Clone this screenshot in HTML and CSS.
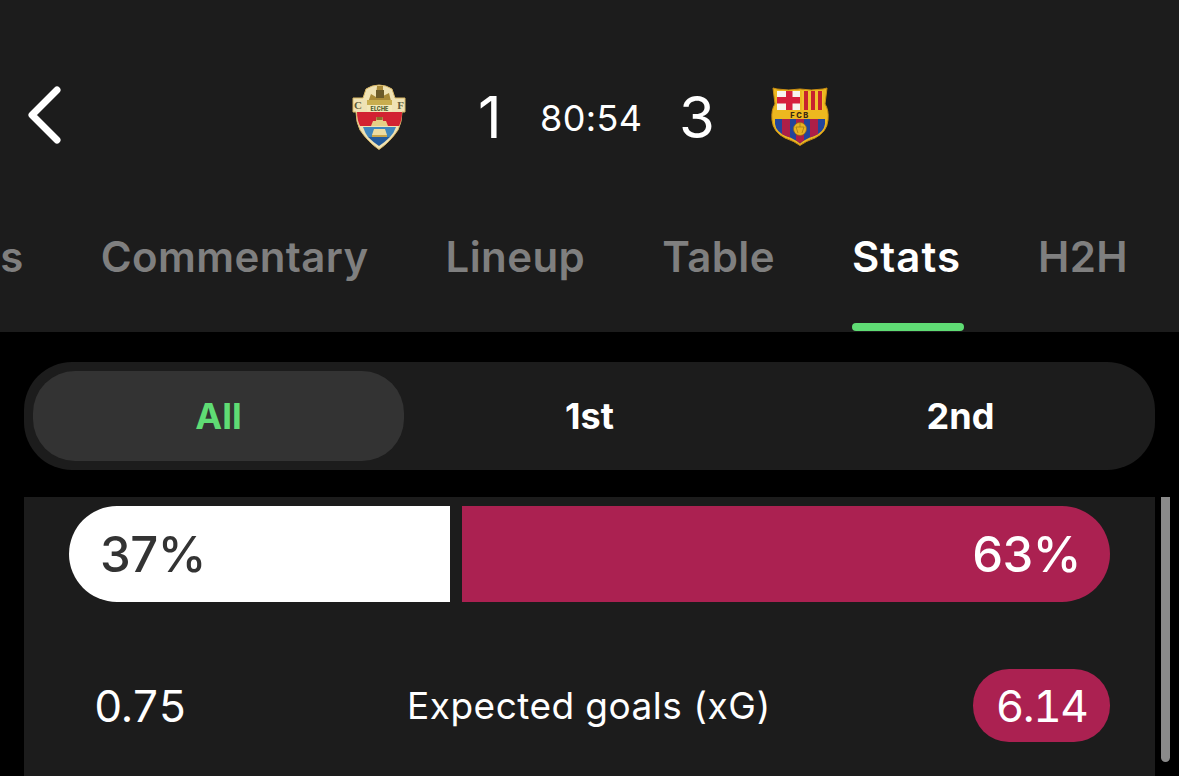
FILE: index.html
```html
<!DOCTYPE html>
<html lang="en">
<head>
<meta charset="utf-8">
<title>Match stats</title>
<link rel="stylesheet" href="styles.css">
</head>
<body>
<header class="header">
  <div class="match">
    <svg class="back" viewBox="0 0 34 58" aria-label="Back"><path d="M30 4 L5 29 L30 54" fill="none" stroke="#fff" stroke-width="7" stroke-linecap="round" stroke-linejoin="round"/></svg>
    <svg class="crest-elche" viewBox="0 0 54 66">
      <path d="M1 14 H11 L14 5 Q20 1 27 1 Q34 1 40 5 L43 14 H53 V28 H50 Q50 38 46 46 Q38 58 27 65.500 Q16 58 8 46 Q4 38 4 28 H1Z" fill="#efe2b4" stroke="#d8b765" stroke-width="1"/>
      <path d="M15 21 L19 10 L24 13 L25 2 L31 2 L31 12 L37 9 L40 21Z" fill="#a98a38"/>
      <path d="M24 6 H32 V14 H24Z" fill="#6b5a2a"/>
      <path d="M15 16 H40 V21 H15Z" fill="#c8ad4e"/>
      <rect x="15" y="21" width="25" height="6.500" fill="#f3e8b8"/>
      <text class="crest-word" x="27.500" y="26.500" text-anchor="middle">ELCHE</text>
      <text class="crest-side" x="6" y="25" text-anchor="middle">C</text>
      <text class="crest-side" x="48.500" y="25" text-anchor="middle">F</text>
      <path d="M5 28 H50 Q50 36 47 42 H8 Q5 36 5 28Z" fill="#d22232"/>
      <path d="M19 42 L21 37 H24 L24.500 33 H30.500 L31 37 H34 L36 42Z" fill="#e6cf86"/>
      <path d="M24.500 33 H30.500 V36 H24.500Z" fill="#8d6f28"/>
      <path d="M11 43 H44 Q42 49 38 53 H16 Q13 49 11 43Z" fill="#3f86bd"/>
      <path d="M16 53 H38 Q33 58 27 62 Q21 58 16 53Z" fill="#235b9c"/>
      <path d="M20 51 L22 45 H33 L35 51Z" fill="#ecdca2"/>
      <path d="M20 51 H35 V53 H20Z" fill="#c9a54a"/>
    </svg>
    <span class="score score-home">1</span>
    <span class="clock">80:54</span>
    <span class="score score-away">3</span>
    <svg class="crest-barca" viewBox="0 0 58 60">
      <defs><clipPath id="barca-lower"><path d="M4 33 H54 V38 Q53 46 43 50 Q34 53 29 57.500 Q24 53 15 50 Q5 46 4 38Z"/></clipPath></defs>
      <path d="M2 2 L6 3 Q18 5 29 3 Q40 5 52 3 L56 2 L54 18 Q58 24 57 34 Q56 46 44 52 Q35 55 29 59.500 Q23 55 14 52 Q2 46 1 34 Q0 24 4 18Z" fill="#edb81f" stroke="#c98e12" stroke-width="1"/>
      <path d="M6 5 H29 V24 H6Z" fill="#f7f4ee"/>
      <rect x="15" y="5" width="6.500" height="19" fill="#d61f3c"/>
      <rect x="6" y="11" width="23" height="6.500" fill="#d61f3c"/>
      <rect x="31" y="5" width="21" height="19" fill="#f0c22d"/>
      <path d="M33 5 H37 V24 H33Z M40 5 H44 V24 H40Z M47 5 H51 V24 H47Z" fill="#c8222e"/>
      <text class="crest-fcb" x="29" y="31.500" text-anchor="middle">FCB</text>
      <g clip-path="url(#barca-lower)">
        <rect x="4" y="33" width="50" height="25" fill="#23459b"/>
        <path d="M11 33 H19 V58 H11Z M25 33 H33 V58 H25Z M39 33 H47 V58 H39Z" fill="#ad1f48"/>
      </g>
      <circle cx="29" cy="43" r="6.500" fill="#e9b423" stroke="#8d6b10" stroke-width=".7"/>
      <path d="M29 37 V41 M25 41 H33 L31 47 M25 41 L27 47" fill="none" stroke="#8d6b10" stroke-width=".6"/>
    </svg>
  </div>
  <nav class="tabs">
    <span class="tab">Events</span>
    <span class="tab">Commentary</span>
    <span class="tab">Lineup</span>
    <span class="tab">Table</span>
    <span class="tab tab-active">Stats</span>
    <span class="tab">H2H</span>
  </nav>
</header>
<main class="content">
  <div class="segments">
    <span class="segment segment-active">All</span>
    <span class="segment">1st</span>
    <span class="segment">2nd</span>
  </div>
  <div class="panel-wrap">
    <section class="panel">
      <div class="possession">
        <div class="poss poss-home" style="width:381px">37%</div>
        <div class="poss poss-away" style="width:648px">63%</div>
      </div>
      <div class="stat">
        <span class="stat-home">0.75</span>
        <span class="stat-label">Expected goals (xG)</span>
        <span class="stat-away">6.14</span>
      </div>
    </section>
    <div class="scrollbar"></div>
  </div>
</main>
</body>
</html>
```

FILE: styles.css
```css
* { box-sizing: border-box; }
html, body { margin: 0; height: 100%; }
body {
  width: 1179px;
  height: 776px;
  overflow: hidden;
  background: #000;
  color: #fff;
  font-family: Inter, "Liberation Sans", sans-serif;
}
.header {
  height: 332px;
  background: #1c1c1c;
  overflow: hidden;
}
.match {
  display: flex;
  align-items: center;
  height: 232px;
  padding: 0 0 0 27px;
}
.back { width: 34px; height: 58px; flex: none; margin-top: -2px; }
.crest-elche { width: 54px; height: 66px; flex: none; margin: 2px 0 0 291px; }
.crest-barca { width: 58px; height: 60px; flex: none; margin: -1px 0 0 56px; }
.crest-word { font-size: 5.500px; font-weight: 800; fill: #4a5a2a; }
.crest-side { font-size: 11px; font-weight: 700; fill: #5c5a3c; font-family: "Liberation Serif", serif; }
.crest-fcb { font-size: 7.500px; font-weight: 800; letter-spacing: 1.500px; fill: #3a2a10; }
.score { font-size: 58px; font-weight: 400; line-height: 60px; padding-top: 2px; }
.score-home { margin-left: 72px; width: 62px; }
.score-away { margin-left: 39px; }
.clock { font-size: 36px; letter-spacing: .4px; line-height: 44px; width: 100px; padding-top: 4px; height: 48px; }
.tabs {
  display: flex;
  justify-content: flex-end;
  gap: 77px;
  height: 100px;
  padding-right: 51px;
}
.tab {
  position: relative;
  flex: none;
  font-size: 42px;
  font-weight: 600;
  letter-spacing: .4px;
  line-height: 50px;
  color: #7f7f7f;
}
.tab-active { color: #fff; letter-spacing: 1px; }
.tab-active::after {
  content: "";
  position: absolute;
  left: 0;
  right: -3px;
  top: 91px;
  height: 8px;
  border-radius: 5px;
  background: #5fdc74;
}
.content { padding: 30px 24px 0; }
.segments {
  display: grid;
  grid-template-columns: repeat(3, 1fr);
  height: 108px;
  padding: 9px;
  border-radius: 48px;
  background: #1c1c1c;
}
.segment {
  display: flex;
  align-items: center;
  justify-content: center;
  font-size: 36px;
  font-weight: 700;
  border-radius: 42px;
}
.segment-active { background: #333; color: #5fdc74; }
.panel-wrap { display: flex; gap: 6px; margin-top: 27px; }
.panel {
  flex: none;
  width: 1131px;
  height: 300px;
  padding: 9px 45px 0;
  background: #1c1c1c;
}
.possession { display: flex; gap: 12px; }
.poss {
  display: flex;
  align-items: center;
  height: 96px;
  font-size: 49px;
  font-weight: 500;
  letter-spacing: -.5px;
}
.poss-home {
  padding-left: 31px;
  border-radius: 48px 0 0 48px;
  background: #fff;
  color: #333;
}
.poss-away {
  justify-content: flex-end;
  padding-right: 29px;
  border-radius: 0 48px 48px 0;
  background: #ab2151;
  color: #fff;
}
.stat {
  display: flex;
  align-items: center;
  margin-top: 67px;
  height: 73px;
  font-variant-numeric: tabular-nums;
}
.stat-home { width: 338px; padding-left: 25px; font-size: 44px; letter-spacing: -1.500px; }
.stat-label { font-size: 37px; letter-spacing: .5px; width: 566px; }
.stat-away {
  display: flex;
  align-items: center;
  justify-content: center;
  width: 137px;
  height: 73px;
  border-radius: 36px;
  background: #ab2151;
  font-size: 44px;
  letter-spacing: -1.500px;
}
.scrollbar {
  flex: none;
  width: 9px;
  height: 265px;
  border-radius: 0 0 5px 5px;
  background: #8a8a8a;
}
```
